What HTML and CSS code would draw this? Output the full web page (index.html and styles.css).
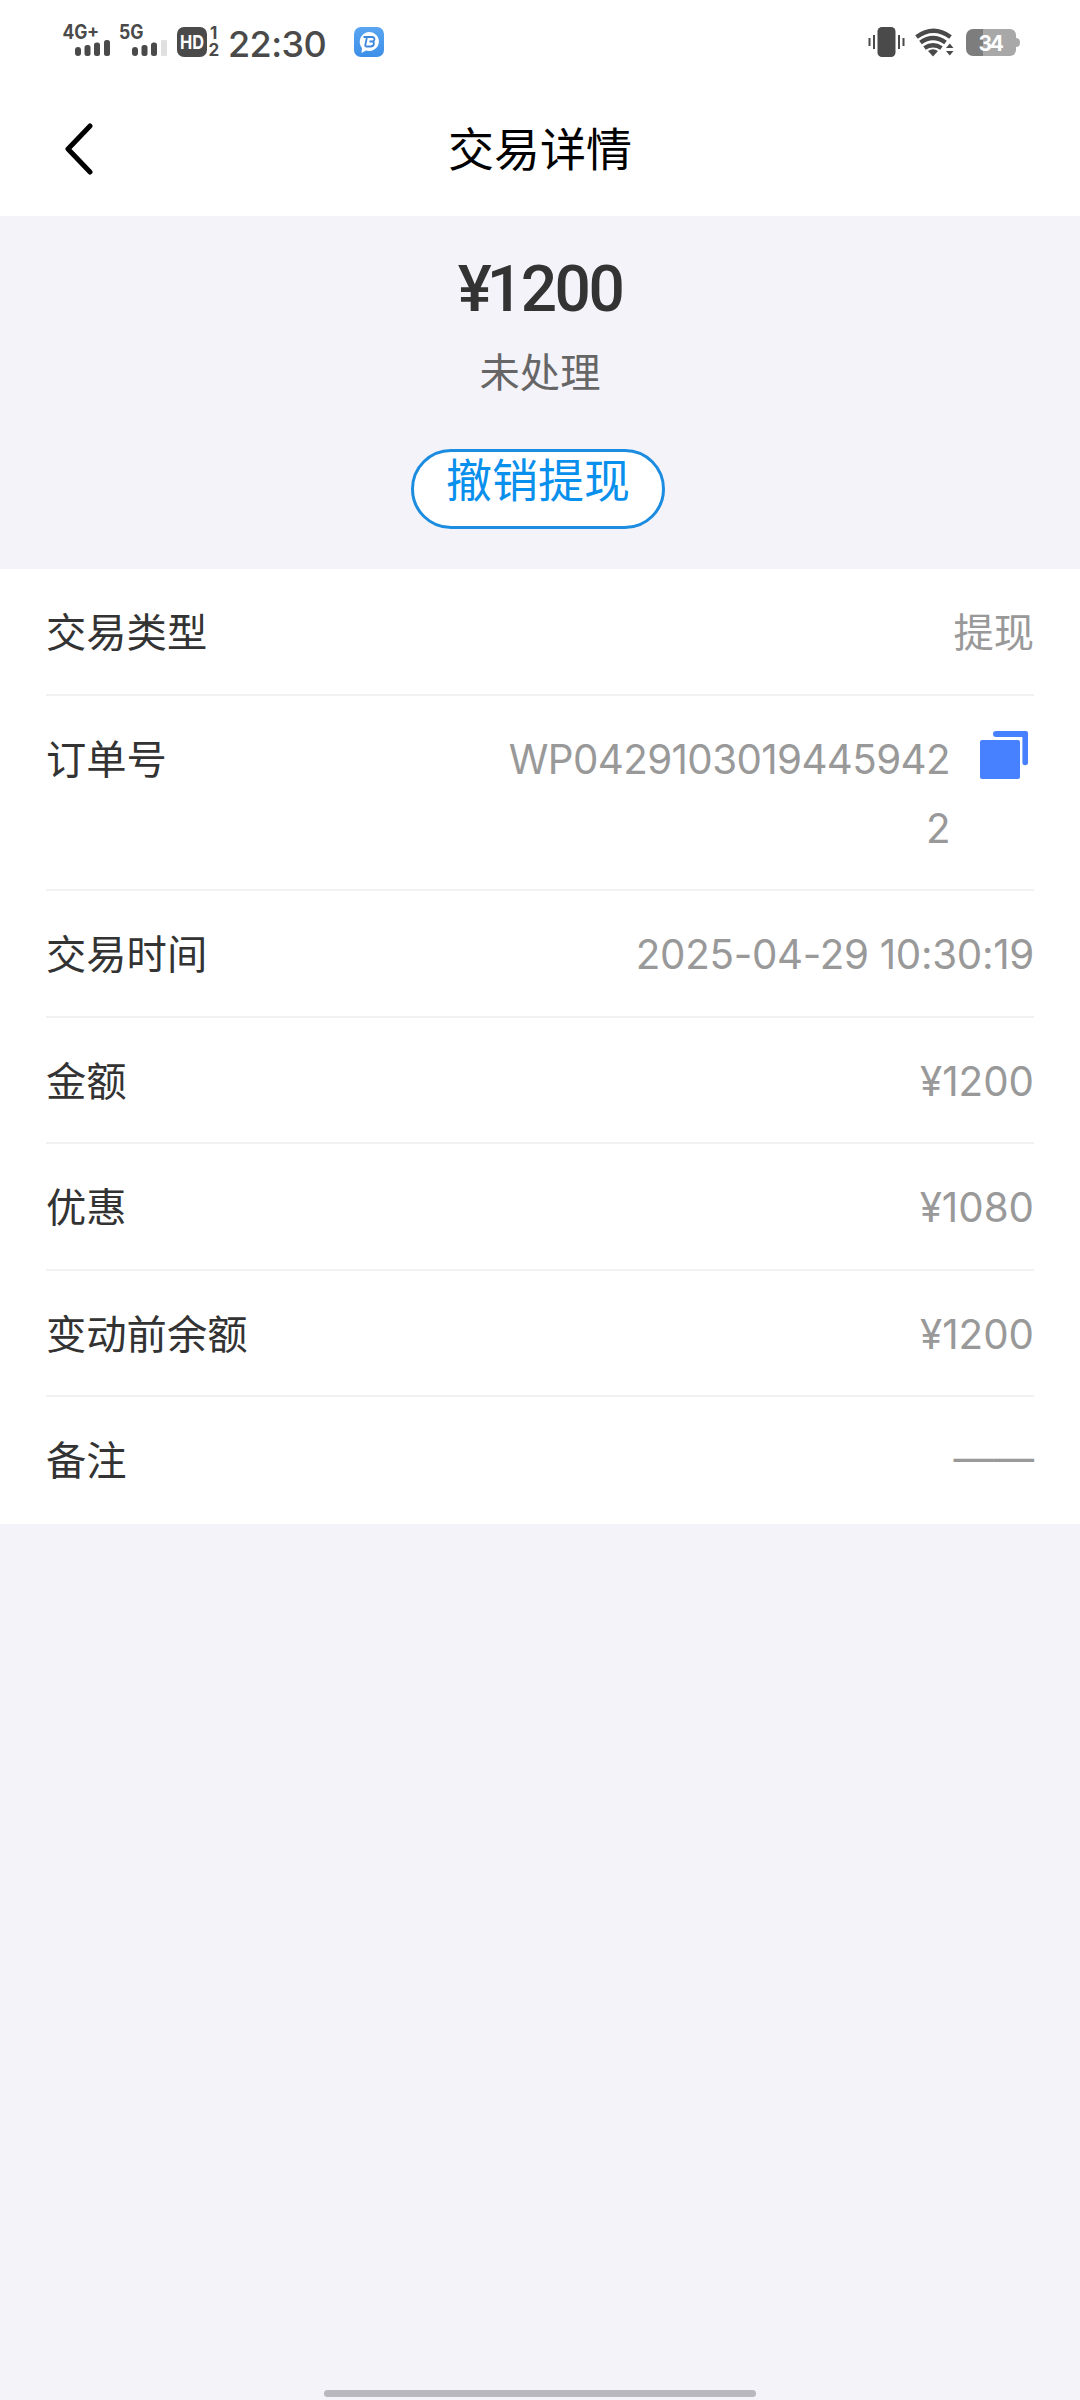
FILE: index.html
```
<!DOCTYPE html>
<html lang="zh-CN">
<head>
    <meta charset="UTF-8">
    <meta name="viewport" content="width=device-width, initial-scale=1.0">
    <title>交易详情</title>
    <link rel="stylesheet" href="styles.css">
</head>
<body>
    <div class="status-bar">
        <div class="status-left">
            <svg class="signals" width="160" height="40" viewBox="0 0 160 40">
                <g class="signal-text">
                    <text x="-0.500" y="19" font-size="19.500" textLength="25" lengthAdjust="spacingAndGlyphs">4G</text>
                    <text x="24" y="17" font-size="18">+</text>
                    <text x="56" y="19" font-size="19.500" textLength="24.500" lengthAdjust="spacingAndGlyphs">5G</text>
                    <text x="147" y="19" font-size="17">1</text>
                    <text x="145.500" y="36" font-size="17">2</text>
                </g>
                <g fill="#4a4a4a">
                    <rect x="12" y="27" width="6" height="9" rx="3"/>
                    <rect x="21.500" y="25" width="6" height="11" rx="2.500"/>
                    <rect x="31" y="22.500" width="6" height="13.500" rx="2.500"/>
                    <rect x="41" y="20" width="6" height="16" rx="2.500"/>
                    <rect x="69" y="27" width="6" height="9" rx="3"/>
                    <rect x="78.500" y="25" width="6" height="11" rx="2.500"/>
                    <rect x="88" y="22.500" width="6" height="13.500" rx="2.500"/>
                    <rect x="98" y="20" width="6" height="16" rx="1" fill="#e0e0e0"/>
                    <rect x="114" y="7" width="30" height="30" rx="7"/>
                </g>
                <text class="hd" x="117" y="28.500" textLength="24" lengthAdjust="spacingAndGlyphs">HD</text>
            </svg>
            <span class="time">22:30</span>
            <svg class="app-icon" width="30" height="30" viewBox="0 0 30 30">
                <defs>
                    <linearGradient id="app" x1="0" y1="0" x2="0" y2="1">
                        <stop offset="0" stop-color="#5aa5f2"/>
                        <stop offset="1" stop-color="#3c8fe8"/>
                    </linearGradient>
                </defs>
                <rect width="30" height="30" rx="7" fill="url(#app)"/>
                <path d="M15 5a10 9.500 0 1 1-3 18.600L7.500 26 8 21A9.800 9.800 0 0 1 15 5z" fill="#fff"/>
                <path d="M9.500 10H18c3.500 0 3 4.500 0 4.500h-2.500H18c3 0 2.500 5-1.500 5H11.500M12.800 11l-1.800 8.500" fill="none" stroke="#3d86dc" stroke-width="1.800"/>
            </svg>
        </div>
        <div class="status-right">
            <svg width="152" height="30" viewBox="0 0 152 30">
                <g fill="#4a4a4a">
                    <rect x="9.500" y="0" width="18" height="30" rx="4.500"/>
                    <rect x="0.500" y="11" width="2" height="8"/>
                    <rect x="5" y="8" width="2" height="14"/>
                    <rect x="30" y="8" width="2" height="14"/>
                    <rect x="34.500" y="11" width="2" height="8"/>
                    <path d="M60 24l5 5.500 5-5.500q-5-3.500-10 0z"/>
                    <path d="M78 21l3.800-4.500 3.700 4.500zM78 24l3.800 4.500 3.700-4.500z"/>
                </g>
                <g fill="none" stroke="#4a4a4a" stroke-width="4.400">
                    <path d="M48.500 10q17-12.500 34 0"/>
                    <path d="M52.500 15.500q12.500-9 25 0"/>
                    <path d="M56.500 21q8.500-5.500 17 0"/>
                </g>
                <path d="M115.500 2H142a6 6 0 0 1 6 6v15a6 6 0 0 1-6 6h-26.500z" fill="#a8a8a8"/>
                <path d="M115.500 2H105a7 7 0 0 0-7 7v13a7 7 0 0 0 7 7h10.500z" fill="#7d7d7d"/>
                <path d="M148 11q4 0 4 4.500T148 20z" fill="#a8a8a8"/>
                <text class="battery" x="110.500" y="23.500" textLength="25.500">34</text>
            </svg>
        </div>
    </div>

    <div class="nav-bar">
        <svg class="back" width="30" height="52" viewBox="0 0 30 52">
            <path d="M26 3L4 26l22 23" fill="none" stroke="#000" stroke-width="5" stroke-linecap="round" stroke-linejoin="round"/>
        </svg>
        <h1>交易详情</h1>
    </div>

    <div class="summary">
        <div class="amount"><span class="yen">¥</span>1200</div>
        <div class="state">未处理</div>
        <button class="cancel">撤销提现</button>
    </div>

    <div class="details">
        <div class="row">
            <span class="label">交易类型</span>
            <span class="value">提现</span>
        </div>
        <div class="row">
            <span class="label">订单号</span>
            <span class="value order">WP04291030194459422</span>
            <svg class="copy" width="48" height="48" viewBox="0 0 48 48" fill="#4781ff">
                <rect x="0" y="9" width="40" height="39" rx="2"/>
                <path d="M16 0h30a2 2 0 0 1 2 2v29.500a2.800 2.800 0 0 1-5.600 0V6H16a3 3 0 0 1 0-6z"/>
            </svg>
        </div>
        <div class="row">
            <span class="label">交易时间</span>
            <span class="value date">2025-04-29 10:30:19</span>
        </div>
        <div class="row">
            <span class="label">金额</span>
            <span class="value">¥1200</span>
        </div>
        <div class="row">
            <span class="label">优惠</span>
            <span class="value">¥1080</span>
        </div>
        <div class="row">
            <span class="label">变动前余额</span>
            <span class="value">¥1200</span>
        </div>
        <div class="row">
            <span class="label">备注</span>
            <span class="value remark">——</span>
        </div>
    </div>

    <div class="home-bar"></div>
</body>
</html>
```
FILE: styles.css
```
* {
    box-sizing: border-box;
}
body {
    margin: 0;
    min-height: 2400px;
    display: flex;
    flex-direction: column;
    background-color: #f4f3f9;
    font-family: Inter, "Noto Sans CJK SC", sans-serif;
    color: #333;
}
.status-bar {
    height: 84px;
    padding: 0 60px 0 63px;
    display: flex;
    justify-content: space-between;
    background-color: #fff;
}
.status-left {
    display: flex;
}
.signals {
    margin-top: 20px;
    overflow: visible;
}
.signal-text {
    fill: #4a4a4a;
    font-weight: 700;
}
.hd {
    fill: #fff;
    font-size: 19px;
    font-weight: 700;
}
.time {
    width: 97px;
    margin: 21px 0 0 5px;
    font-size: 36px;
    line-height: 46px;
    font-weight: 500;
    letter-spacing: -0.6px;
    color: #4a4a4a;
}
.app-icon {
    margin: 27px 0 0 29px;
}
.status-right {
    margin-top: 27px;
}
.battery {
    fill: #fff;
    font-size: 21px;
    font-weight: 700;
}
.nav-bar {
    height: 132px;
    padding: 39px 64px 0;
    display: grid;
    grid-template-columns: 30px 1fr 30px;
    align-items: start;
    background-color: #fff;
}
h1 {
    margin: -7px 0 0;
    text-align: center;
    font-size: 46px;
    line-height: 66px;
    font-weight: 400;
    color: #000;
}
.summary {
    height: 353px;
    display: flex;
    flex-direction: column;
    align-items: center;
}
.amount {
    margin-top: 36px;
    font-family: Roboto, sans-serif;
    font-size: 64px;
    line-height: 76px;
    font-weight: 500;
    letter-spacing: -2.5px;
}
.yen {
    letter-spacing: -5px;
}
.state {
    margin-top: 16px;
    font-size: 40.3px;
    line-height: 58px;
    color: #666;
}
.cancel {
    width: 254px;
    height: 80px;
    margin: 47px 4px 0 0;
    padding: 0 0 18px;
    border: 3px solid #1b8ce0;
    border-radius: 40px;
    background-color: #fff;
    font-family: inherit;
    font-size: 46px;
    line-height: 56px;
    color: #098fec;
}
.details {
    padding: 0 46px;
    background-color: #fff;
}
.row {
    display: flex;
    padding: 29px 0 26.3px;
    border-bottom: 2px solid #f2f2f2;
    font-size: 40.3px;
    line-height: 69.2px;
}
.row:last-child {
    border-bottom: none;
    padding-bottom: 29px;
}
.label {
    flex: 1;
}
.value {
    color: #999;
    text-align: right;
}
.order {
    width: 450px;
    letter-spacing: -0.6px;
    word-break: break-all;
}
.date {
    letter-spacing: -0.3px;
}
.remark {
    margin-top: -2px;
}
.copy {
    margin: 6.5px 6px 0 30px;
}
.home-bar {
    width: 432px;
    height: 7px;
    margin: auto auto 3px;
    border-radius: 4px;
    background-color: #b9b8be;
}
```
